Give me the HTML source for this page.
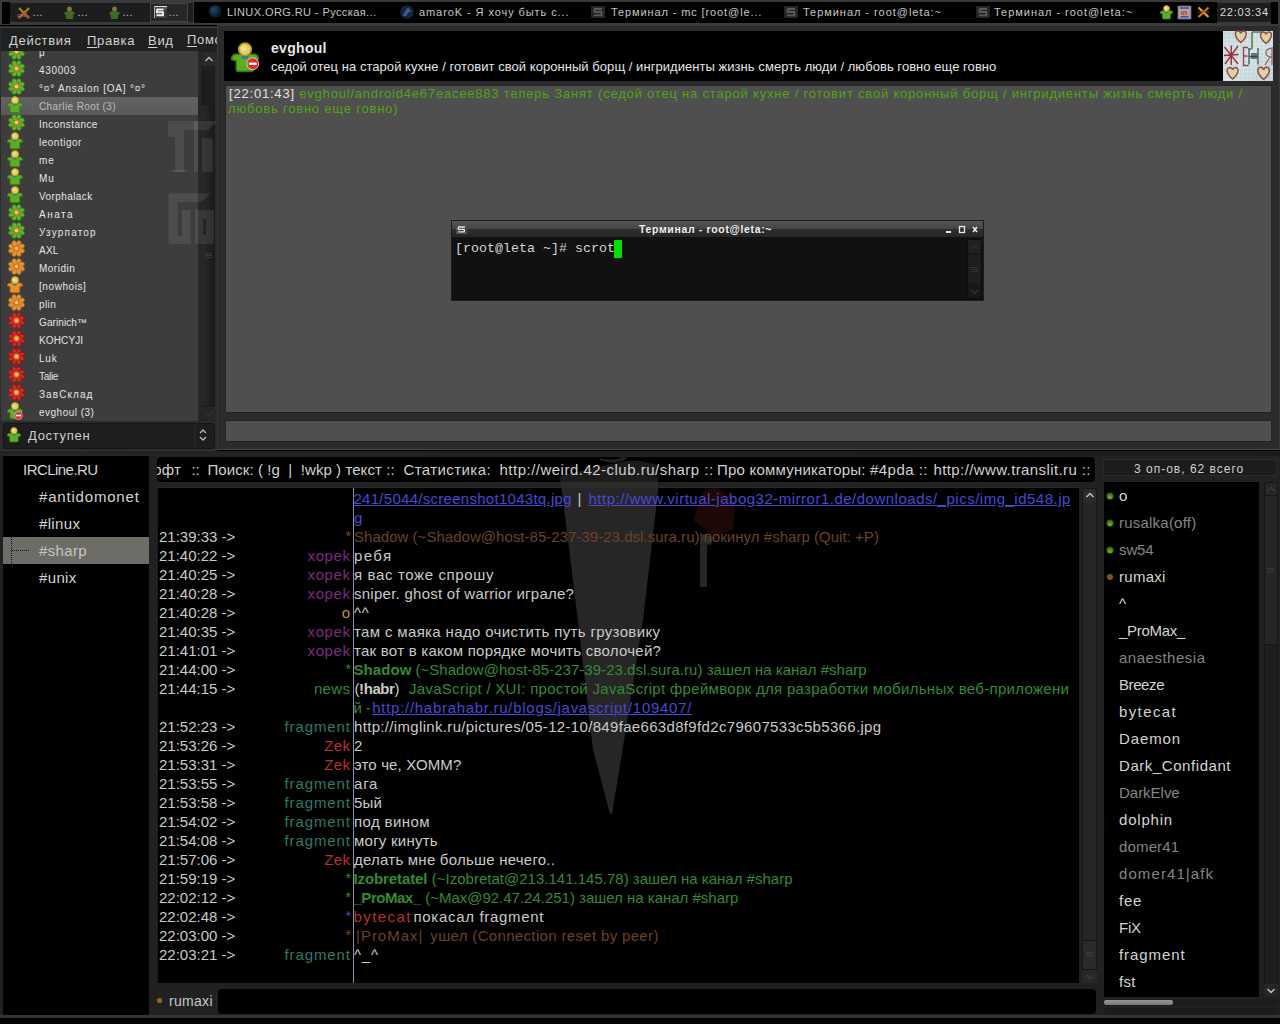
<!DOCTYPE html><html><head><meta charset="utf-8"><style>
*{margin:0;padding:0;box-sizing:border-box}
html,body{width:1280px;height:1024px;overflow:hidden;background:#000;font-family:"Liberation Sans",sans-serif;color:#ddd}
.a{position:absolute}
.t{position:absolute;white-space:nowrap;line-height:1}
svg.i{position:absolute;overflow:visible}
</style></head><body>
<svg width="0" height="0" style="position:absolute">
<defs>
<symbol id="flowerG" viewBox="0 0 16 16"><g fill="#7cc448" stroke="#3a8a12" stroke-width="1"><ellipse cx="8" cy="3.4" rx="2.1" ry="3.1" transform="rotate(22.5 8 8)"/><ellipse cx="8" cy="3.4" rx="2.1" ry="3.1" transform="rotate(67.5 8 8)"/><ellipse cx="8" cy="3.4" rx="2.1" ry="3.1" transform="rotate(112.5 8 8)"/><ellipse cx="8" cy="3.4" rx="2.1" ry="3.1" transform="rotate(157.5 8 8)"/><ellipse cx="8" cy="3.4" rx="2.1" ry="3.1" transform="rotate(202.5 8 8)"/><ellipse cx="8" cy="3.4" rx="2.1" ry="3.1" transform="rotate(247.5 8 8)"/><ellipse cx="8" cy="3.4" rx="2.1" ry="3.1" transform="rotate(292.5 8 8)"/><ellipse cx="8" cy="3.4" rx="2.1" ry="3.1" transform="rotate(337.5 8 8)"/></g><g fill="#5aa81e" stroke="none"><ellipse cx="8" cy="3.4" rx="0.9" ry="1.8" transform="rotate(22.5 8 8)"/><ellipse cx="8" cy="3.4" rx="0.9" ry="1.8" transform="rotate(67.5 8 8)"/><ellipse cx="8" cy="3.4" rx="0.9" ry="1.8" transform="rotate(112.5 8 8)"/><ellipse cx="8" cy="3.4" rx="0.9" ry="1.8" transform="rotate(157.5 8 8)"/><ellipse cx="8" cy="3.4" rx="0.9" ry="1.8" transform="rotate(202.5 8 8)"/><ellipse cx="8" cy="3.4" rx="0.9" ry="1.8" transform="rotate(247.5 8 8)"/><ellipse cx="8" cy="3.4" rx="0.9" ry="1.8" transform="rotate(292.5 8 8)"/><ellipse cx="8" cy="3.4" rx="0.9" ry="1.8" transform="rotate(337.5 8 8)"/></g><circle cx="8" cy="8" r="2.3" fill="#e8c888" stroke="#d86a18" stroke-width="1"/></symbol>
<symbol id="flowerO" viewBox="0 0 16 16"><g fill="#eca650" stroke="#b8701a" stroke-width="1"><ellipse cx="8" cy="3.4" rx="2.1" ry="3.1" transform="rotate(22.5 8 8)"/><ellipse cx="8" cy="3.4" rx="2.1" ry="3.1" transform="rotate(67.5 8 8)"/><ellipse cx="8" cy="3.4" rx="2.1" ry="3.1" transform="rotate(112.5 8 8)"/><ellipse cx="8" cy="3.4" rx="2.1" ry="3.1" transform="rotate(157.5 8 8)"/><ellipse cx="8" cy="3.4" rx="2.1" ry="3.1" transform="rotate(202.5 8 8)"/><ellipse cx="8" cy="3.4" rx="2.1" ry="3.1" transform="rotate(247.5 8 8)"/><ellipse cx="8" cy="3.4" rx="2.1" ry="3.1" transform="rotate(292.5 8 8)"/><ellipse cx="8" cy="3.4" rx="2.1" ry="3.1" transform="rotate(337.5 8 8)"/></g><g fill="#e08a30" stroke="none"><ellipse cx="8" cy="3.4" rx="0.9" ry="1.8" transform="rotate(22.5 8 8)"/><ellipse cx="8" cy="3.4" rx="0.9" ry="1.8" transform="rotate(67.5 8 8)"/><ellipse cx="8" cy="3.4" rx="0.9" ry="1.8" transform="rotate(112.5 8 8)"/><ellipse cx="8" cy="3.4" rx="0.9" ry="1.8" transform="rotate(157.5 8 8)"/><ellipse cx="8" cy="3.4" rx="0.9" ry="1.8" transform="rotate(202.5 8 8)"/><ellipse cx="8" cy="3.4" rx="0.9" ry="1.8" transform="rotate(247.5 8 8)"/><ellipse cx="8" cy="3.4" rx="0.9" ry="1.8" transform="rotate(292.5 8 8)"/><ellipse cx="8" cy="3.4" rx="0.9" ry="1.8" transform="rotate(337.5 8 8)"/></g><circle cx="8" cy="8" r="2.3" fill="#f0c070" stroke="#c86a10" stroke-width="1"/></symbol>
<symbol id="flowerR" viewBox="0 0 16 16"><g fill="#dc3a3a" stroke="#9a1414" stroke-width="1"><ellipse cx="8" cy="3.4" rx="2.1" ry="3.1" transform="rotate(22.5 8 8)"/><ellipse cx="8" cy="3.4" rx="2.1" ry="3.1" transform="rotate(67.5 8 8)"/><ellipse cx="8" cy="3.4" rx="2.1" ry="3.1" transform="rotate(112.5 8 8)"/><ellipse cx="8" cy="3.4" rx="2.1" ry="3.1" transform="rotate(157.5 8 8)"/><ellipse cx="8" cy="3.4" rx="2.1" ry="3.1" transform="rotate(202.5 8 8)"/><ellipse cx="8" cy="3.4" rx="2.1" ry="3.1" transform="rotate(247.5 8 8)"/><ellipse cx="8" cy="3.4" rx="2.1" ry="3.1" transform="rotate(292.5 8 8)"/><ellipse cx="8" cy="3.4" rx="2.1" ry="3.1" transform="rotate(337.5 8 8)"/></g><g fill="#c02020" stroke="none"><ellipse cx="8" cy="3.4" rx="0.9" ry="1.8" transform="rotate(22.5 8 8)"/><ellipse cx="8" cy="3.4" rx="0.9" ry="1.8" transform="rotate(67.5 8 8)"/><ellipse cx="8" cy="3.4" rx="0.9" ry="1.8" transform="rotate(112.5 8 8)"/><ellipse cx="8" cy="3.4" rx="0.9" ry="1.8" transform="rotate(157.5 8 8)"/><ellipse cx="8" cy="3.4" rx="0.9" ry="1.8" transform="rotate(202.5 8 8)"/><ellipse cx="8" cy="3.4" rx="0.9" ry="1.8" transform="rotate(247.5 8 8)"/><ellipse cx="8" cy="3.4" rx="0.9" ry="1.8" transform="rotate(292.5 8 8)"/><ellipse cx="8" cy="3.4" rx="0.9" ry="1.8" transform="rotate(337.5 8 8)"/></g><circle cx="8" cy="8" r="2.3" fill="#f0c060" stroke="#e07a20" stroke-width="1"/></symbol>
<symbol id="personG" viewBox="0 0 16 18"><path d="M2.2 7 Q0.2 7.8 0.3 10 L3 10.8 L3 15.6 Q3.2 16.8 4.4 16.8 L11.6 16.8 Q12.8 16.8 12.8 15.6 L12.8 10.8 L15.6 10 Q15.8 7.8 13.8 7 Z" fill="#5cae22" stroke="#3a7a12" stroke-width="0.9"/><path d="M5.6 6.8 L10.2 6.8 Q10 9.8 7.9 9.8 Q5.8 9.8 5.6 6.8 Z" fill="#3f6fb0"/><circle cx="8" cy="4.2" r="3.6" fill="#e4d060" stroke="#b89418" stroke-width="0.9"/><circle cx="7.3" cy="3.6" r="1.6" fill="#f0e8b0" opacity="0.6"/></symbol>
<symbol id="personO" viewBox="0 0 16 18"><path d="M2.2 7 Q0.2 7.8 0.3 10 L3 10.8 L3 15.6 Q3.2 16.8 4.4 16.8 L11.6 16.8 Q12.8 16.8 12.8 15.6 L12.8 10.8 L15.6 10 Q15.8 7.8 13.8 7 Z" fill="#e8902a" stroke="#a86010" stroke-width="0.9"/><path d="M5.6 6.8 L10.2 6.8 Q10 9.8 7.9 9.8 Q5.8 9.8 5.6 6.8 Z" fill="#3f6fb0"/><circle cx="8" cy="4.2" r="3.6" fill="#e4d060" stroke="#b89418" stroke-width="0.9"/><circle cx="7.3" cy="3.6" r="1.6" fill="#f0e8b0" opacity="0.6"/></symbol>
<symbol id="minus" viewBox="0 0 16 16">
 <circle cx="8" cy="8" r="7" fill="#e22a2a" stroke="#fff" stroke-width="0.8"/>
 <rect x="3.5" y="6.6" width="9" height="2.8" fill="#fff"/>
</symbol>
<symbol id="termico" viewBox="0 0 16 16">
 <rect x="0.5" y="0.5" width="15" height="15" fill="#2a2a2a" stroke="#555" stroke-width="1"/>
 <path d="M3 4 H12 M3 4 V8 H11 V12 H3" fill="none" stroke="#888" stroke-width="2"/>
</symbol>
</defs></svg>
<div class="a" style="left:0px;top:0px;width:1280px;height:25px;background:#3a3a3a"></div>
<div class="a" style="left:2px;top:2px;width:8px;height:22px;background:#000"></div>
<div class="a" style="left:10px;top:3px;width:183px;height:19px;background:#1d1d1d"></div>
<div class="a" style="left:150px;top:3px;width:38px;height:19px;background:#262626;border:1px solid #444"></div>
<div class="a" style="left:194px;top:2px;width:1023px;height:21px;background:#000"></div>
<div class="a" style="left:1217px;top:3px;width:54px;height:19px;background:#1c1c1c"></div>
<div class="a" style="left:1271px;top:2px;width:7px;height:22px;background:#000"></div>
<svg class="i" style="left:17px;top:6px" width="14" height="14"><path d="M2 2 L12 12 M12 2 L2 12" stroke="#a0801a" stroke-width="2.4"/><path d="M2 12 L7 7 M7 7 L12 12" stroke="#c04a1a" stroke-width="2.4"/><text x="0" y="11" font-size="5" fill="#888" font-family="Liberation Sans">cmd</text></svg>
<div class="t" style="left:32px;top:7px;font-size:11px;color:#c6c6c6;letter-spacing:0.36px;color:#bbb;letter-spacing:0">…</div>
<svg class="i" style="left:63px;top:6px" width="13" height="13"><path d="M1 8 Q1.5 5.5 4 5.3 L9 5.3 Q11.5 5.5 12 8 L10.3 8.4 L10.2 12.5 Q6.5 13.5 2.8 12.5 L2.7 8.4 Z" fill="#3e6a1e"/><circle cx="6.5" cy="3" r="2.4" fill="#857a3a"/><rect x="5" y="5" width="3" height="1.5" fill="#3a5a80"/></svg>
<div class="t" style="left:77px;top:7px;font-size:11px;color:#c6c6c6;letter-spacing:0.36px;color:#bbb;letter-spacing:0">…</div>
<svg class="i" style="left:108px;top:6px" width="13" height="13"><path d="M1 8 Q1.5 5.5 4 5.3 L9 5.3 Q11.5 5.5 12 8 L10.3 8.4 L10.2 12.5 Q6.5 13.5 2.8 12.5 L2.7 8.4 Z" fill="#3e6a1e"/><circle cx="6.5" cy="3" r="2.4" fill="#857a3a"/><rect x="5" y="5" width="3" height="1.5" fill="#3a5a80"/></svg>
<div class="t" style="left:122px;top:7px;font-size:11px;color:#c6c6c6;letter-spacing:0.36px;color:#bbb;letter-spacing:0">…</div>
<svg class="i" style="left:154px;top:6px" width="13" height="12"><rect x="0" y="0" width="13" height="12" fill="#555"/><rect x="0" y="0" width="13" height="1.2" fill="#ddd"/><rect x="0" y="0" width="1.2" height="12" fill="#aaa"/><rect x="1.2" y="1.2" width="11.8" height="10.8" fill="#3a3a3a"/><path d="M2.5 3.5 H9.5 M3 3.3 V6.2 H9 V9.2 H2.5" fill="none" stroke="#f0f0f0" stroke-width="1.9"/><path d="M9 1.2 L13 1.2 L11 4 Z" fill="#666"/></svg>
<div class="t" style="left:168px;top:7px;font-size:11px;color:#c6c6c6;letter-spacing:0.36px;color:#bbb;letter-spacing:0">…</div>
<svg class="i" style="left:209px;top:5px" width="13" height="13"><defs><radialGradient id="gg209" cx="0.35" cy="0.35" r="0.7"><stop offset="0" stop-color="#1e4a6a"/><stop offset="1" stop-color="#06121e"/></radialGradient></defs><circle cx="6.5" cy="6.5" r="6.3" fill="url(#gg209)"/></svg>
<div class="t" style="left:227px;top:7px;font-size:11px;color:#c6c6c6;letter-spacing:0.41px">LINUX.ORG.RU - Русская...</div>
<svg class="i" style="left:400px;top:5px" width="14" height="14"><circle cx="7" cy="7" r="6.8" fill="#16243e"/><path d="M3 11 L5 6 L7 3.5 L9 2.5 L9.5 4.5 L11.5 6 L10 7 L8 7.5 L6.5 11 Z" fill="#3c5a80"/></svg>
<div class="t" style="left:419px;top:7px;font-size:11px;color:#c6c6c6;letter-spacing:0.92px">amaroK - Я хочу быть с...</div>
<svg class="i" style="left:591px;top:6px" width="14" height="12"><rect x="0" y="0" width="14" height="12" fill="#252525"/><path d="M3 3 H11 M3.5 2.8 V6 H10.5 V9.3 H3" fill="none" stroke="#5a5a5a" stroke-width="1.8"/></svg>
<div class="t" style="left:611px;top:7px;font-size:11px;color:#c6c6c6;letter-spacing:0.89px">Терминал - mc [root@le...</div>
<svg class="i" style="left:784px;top:6px" width="14" height="12"><rect x="0" y="0" width="14" height="12" fill="#252525"/><path d="M3 3 H11 M3.5 2.8 V6 H10.5 V9.3 H3" fill="none" stroke="#5a5a5a" stroke-width="1.8"/></svg>
<div class="t" style="left:803px;top:7px;font-size:11px;color:#c6c6c6;letter-spacing:0.96px">Терминал - root@leta:~</div>
<svg class="i" style="left:976px;top:6px" width="14" height="12"><rect x="0" y="0" width="14" height="12" fill="#252525"/><path d="M3 3 H11 M3.5 2.8 V6 H10.5 V9.3 H3" fill="none" stroke="#5a5a5a" stroke-width="1.8"/></svg>
<div class="t" style="left:994px;top:7px;font-size:11px;color:#c6c6c6;letter-spacing:0.97px">Терминал - root@leta:~</div>
<svg class="i" style="left:1159px;top:5px" width="15" height="15" viewBox="0 0 16 18"><use href="#personG"/></svg>
<svg class="i" style="left:1178px;top:6px" width="13" height="13"><rect x="0" y="0" width="13" height="13" fill="#aaa59c" stroke="#6a6a6a" stroke-width="0.8"/><rect x="2" y="1.2" width="9" height="1.6" fill="#3030e0" opacity="0.8"/><text x="3" y="8.6" font-size="6" fill="#e01818" font-family="Liberation Sans" font-weight="bold">05</text><rect x="2.5" y="10" width="8" height="1.6" fill="#3030e0" opacity="0.8"/></svg>
<svg class="i" style="left:1197px;top:6px" width="13" height="12"><path d="M1.5 1.5 L11.5 11" stroke="#e0a818" stroke-width="2.2"/><path d="M11.5 1.5 L1.5 11" stroke="#e06a18" stroke-width="2.2"/><path d="M1 6.5 Q6.5 3.5 12 6.5" stroke="#555" stroke-width="0.9" fill="none"/></svg>
<div class="t" style="left:1220px;top:7px;font-size:11px;color:#d8d8d8;letter-spacing:0.75px">22:03:34</div>
<div class="a" style="left:0px;top:25px;width:217px;height:2px;background:#000"></div>
<div class="a" style="left:0px;top:26px;width:218px;height:425px;background:#2a2a2a"></div>
<div class="a" style="left:0px;top:27px;width:217px;height:1px;background:#3c3c3c"></div>
<div class="a" style="left:1px;top:28px;width:216px;height:23px;background:#202020"></div>
<div class="t" style="left:9px;top:33px;font-size:13px;color:#d2d2d2;letter-spacing:0.7px;top:34px;"><span style="text-decoration:underline;text-underline-offset:2px">Д</span>ействия</div>
<div class="t" style="left:87px;top:33px;font-size:13px;color:#d2d2d2;letter-spacing:0.7px;top:34px;"><span style="text-decoration:underline;text-underline-offset:2px">П</span>равка</div>
<div class="t" style="left:148px;top:33px;font-size:13px;color:#d2d2d2;letter-spacing:0.7px;top:34px;"><span style="text-decoration:underline;text-underline-offset:2px">В</span>ид</div>
<div class="a" style="left:187px;top:28px;width:30px;height:23px;overflow:hidden"><div class="t" style="left:0;top:5px;font-size:13px;color:#d2d2d2;letter-spacing:0.7px"><span style="text-decoration:underline;text-underline-offset:2px">П</span>омощь</div></div>
<div class="a" style="left:1px;top:51px;width:197px;height:370px;background:#3d3d3d;overflow:hidden">
<div class="a" style="left:0;top:46px;width:198px;height:18px;background:linear-gradient(#626262,#5a5a5a)"></div>
<svg class="i" style="left:6.5px;top:-8px" width="17" height="17"><use href="#flowerG"/></svg>
<div class="t" style="left:38px;top:-3px;font-size:10px;color:#e4e4e4;letter-spacing:0.35px">μ</div>
<svg class="i" style="left:6.5px;top:9px" width="17" height="17"><use href="#flowerG"/></svg>
<div class="t" style="left:38px;top:15px;font-size:10px;color:#e4e4e4;letter-spacing:0.65px">430003</div>
<svg class="i" style="left:6.5px;top:27px" width="17" height="17"><use href="#flowerG"/></svg>
<div class="t" style="left:38px;top:33px;font-size:10px;color:#e4e4e4;letter-spacing:0.79px">°¤° Ansalon [OA] °¤°</div>
<svg class="i" style="left:6px;top:45px" width="16" height="18"><use href="#personG"/></svg>
<div class="t" style="left:38px;top:51px;font-size:10px;color:#bdbdbd;letter-spacing:0.40px">Charlie Root (3)</div>
<svg class="i" style="left:6.5px;top:63px" width="17" height="17"><use href="#flowerG"/></svg>
<div class="t" style="left:38px;top:69px;font-size:10px;color:#e4e4e4;letter-spacing:0.45px">Inconstance</div>
<svg class="i" style="left:6px;top:81px" width="16" height="18"><use href="#personG"/></svg>
<div class="t" style="left:38px;top:87px;font-size:10px;color:#e4e4e4;letter-spacing:0.51px">leontigor</div>
<svg class="i" style="left:6px;top:99px" width="16" height="18"><use href="#personG"/></svg>
<div class="t" style="left:38px;top:105px;font-size:10px;color:#e4e4e4;letter-spacing:0.80px">me</div>
<svg class="i" style="left:6px;top:117px" width="16" height="18"><use href="#personG"/></svg>
<div class="t" style="left:38px;top:123px;font-size:10px;color:#e4e4e4;letter-spacing:0.80px">Mu</div>
<svg class="i" style="left:6px;top:135px" width="16" height="18"><use href="#personG"/></svg>
<div class="t" style="left:38px;top:141px;font-size:10px;color:#e4e4e4;letter-spacing:0.41px">Vorphalack</div>
<svg class="i" style="left:6.5px;top:153px" width="17" height="17"><use href="#flowerG"/></svg>
<div class="t" style="left:38px;top:159px;font-size:10px;color:#e4e4e4;letter-spacing:1.53px">Аната</div>
<svg class="i" style="left:6.5px;top:171px" width="17" height="17"><use href="#flowerG"/></svg>
<div class="t" style="left:38px;top:177px;font-size:10px;color:#e4e4e4;letter-spacing:1.20px">Узурпатор</div>
<svg class="i" style="left:6.5px;top:189px" width="17" height="17"><use href="#flowerO"/></svg>
<div class="t" style="left:38px;top:195px;font-size:10px;color:#e4e4e4;letter-spacing:0.25px">AXL</div>
<svg class="i" style="left:6.5px;top:207px" width="17" height="17"><use href="#flowerO"/></svg>
<div class="t" style="left:38px;top:213px;font-size:10px;color:#e4e4e4;letter-spacing:0.49px">Moridin</div>
<svg class="i" style="left:6px;top:225px" width="16" height="18"><use href="#personO"/></svg>
<div class="t" style="left:38px;top:231px;font-size:10px;color:#e4e4e4;letter-spacing:0.58px">[nowhois]</div>
<svg class="i" style="left:6.5px;top:243px" width="17" height="17"><use href="#flowerO"/></svg>
<div class="t" style="left:38px;top:249px;font-size:10px;color:#e4e4e4;letter-spacing:0.41px">plin</div>
<svg class="i" style="left:6.5px;top:261px" width="17" height="17"><use href="#flowerR"/></svg>
<div class="t" style="left:38px;top:267px;font-size:10px;color:#e4e4e4;letter-spacing:0.10px">Garinich™</div>
<svg class="i" style="left:6.5px;top:279px" width="17" height="17"><use href="#flowerR"/></svg>
<div class="t" style="left:38px;top:285px;font-size:10px;color:#e4e4e4;letter-spacing:0.13px">KOHCYJI</div>
<svg class="i" style="left:6.5px;top:297px" width="17" height="17"><use href="#flowerR"/></svg>
<div class="t" style="left:38px;top:303px;font-size:10px;color:#e4e4e4;letter-spacing:0.80px">Luk</div>
<svg class="i" style="left:6.5px;top:315px" width="17" height="17"><use href="#flowerR"/></svg>
<div class="t" style="left:38px;top:321px;font-size:10px;color:#e4e4e4;letter-spacing:-0.29px">Talie</div>
<svg class="i" style="left:6.5px;top:333px" width="17" height="17"><use href="#flowerR"/></svg>
<div class="t" style="left:38px;top:339px;font-size:10px;color:#e4e4e4;letter-spacing:1.08px">ЗавСклад</div>
<svg class="i" style="left:6px;top:351px" width="16" height="18"><use href="#personG"/></svg>
<svg class="i" style="left:13px;top:360px" width="9" height="9"><use href="#minus"/></svg>
<div class="t" style="left:38px;top:357px;font-size:10px;color:#e4e4e4;letter-spacing:0.49px">evghoul (3)</div>
</div>
<div class="a" style="left:198px;top:51px;width:4px;height:370px;background:#262626"></div>
<div class="a" style="left:202px;top:51px;width:13px;height:370px;background:#1e1e1e;border-left:1px solid #161616"></div>
<div class="a" style="left:202px;top:52px;width:13px;height:14px;background:#2a2a2a;border-radius:3px 3px 0 0"></div>
<svg class="i" style="left:204px;top:55px" width="10" height="8"><path d="M1.5 6 L5 2.5 L8.5 6" stroke="#bbb" stroke-width="1.4" fill="none"/></svg>
<div class="a" style="left:202px;top:104px;width:13px;height:303px;background:linear-gradient(90deg,#282828,#1a1a1a);border-top:1px solid #1a1a1a;border-bottom:1px solid #1a1a1a"></div>
<div class="a" style="left:205px;top:253px;width:7px;height:1px;background:#3a3a3a"></div>
<div class="a" style="left:205px;top:255px;width:7px;height:1px;background:#3a3a3a"></div>
<div class="a" style="left:205px;top:257px;width:7px;height:1px;background:#3a3a3a"></div>
<div class="a" style="left:202px;top:407px;width:13px;height:14px;background:#262626;border-radius:0 0 3px 3px"></div>
<svg class="i" style="left:204px;top:410px" width="10" height="8"><path d="M1.5 2 L5 5.5 L8.5 2" stroke="#333" stroke-width="1.4" fill="none"/></svg>
<div class="a" style="left:3px;top:423px;width:212px;height:26px;background:#1e1e1e;border:1px solid #151515;border-radius:3px"></div>
<div class="a" style="left:194px;top:425px;width:1px;height:22px;background:#2a2a2a"></div>
<svg class="i" style="left:6px;top:427px" width="16" height="16"><use href="#personG"/></svg>
<div class="t" style="left:28px;top:429px;font-size:13px;color:#cfcfcf;letter-spacing:0.7px">Доступен</div>
<svg class="i" style="left:198px;top:427px" width="10" height="16"><path d="M2 6 L5 3 L8 6 M2 10 L5 13 L8 10" stroke="#bbb" stroke-width="1.3" fill="none"/></svg>
<svg class="i" style="left:160px;top:115px" width="58" height="135" viewBox="0 0 58 135">
<g fill="#fff" fill-opacity="0.085">
<path d="M8 6 H56 V8 L48 15 H8 Z"/>
<path d="M8 15 H15 V22 H12 Q8 22 8 18 Z"/>
<rect x="15" y="15" width="9" height="42"/>
<rect x="11" y="55" width="16" height="2"/>
<rect x="34" y="6" width="4" height="51"/>
<rect x="42" y="23" width="11" height="34" rx="3"/>
<path d="M11.5 78.3 H50.6 L41.5 87 H8.5 V81.3 Q8.5 78.3 11.5 78.3 Z"/>
<path d="M8.5 87 H17.6 V129 H11.5 Q8.5 129 8.5 126 Z"/>
<rect x="17.6" y="121" width="13" height="8"/>
<rect x="22" y="95" width="8.6" height="26"/>
<path d="M35 95 H54 V129 H35 Z M43 104 V120 H46 V104 Z" fill-rule="evenodd"/>
</g>
</svg>
<div class="a" style="left:217px;top:25px;width:1063px;height:426px;background:#2b2b2b"></div>
<div class="a" style="left:217px;top:25px;width:1063px;height:1px;background:#3a3a3a"></div>
<div class="a" style="left:217px;top:25px;width:1px;height:426px;background:#383838"></div>
<div class="a" style="left:1279px;top:25px;width:1px;height:425px;background:#3a3a3a"></div>
<div class="a" style="left:224px;top:31px;width:999px;height:50px;background:#000"></div>
<svg class="i" style="left:231px;top:42px" width="28" height="31.5" viewBox="0 0 16 18"><use href="#personG"/></svg>
<svg class="i" style="left:246px;top:57px" width="13.5" height="13.5"><use href="#minus"/></svg>
<div class="t" style="left:271px;top:41px;font-size:14px;font-weight:bold;color:#e8e8e8;letter-spacing:0.3px">evghoul</div>
<div class="t" style="left:271px;top:60px;font-size:13px;color:#e4e4e4;letter-spacing:0.05px">седой отец на старой кухне / готовит свой коронный борщ / ингридиенты жизнь смерть люди / любовь говно еще говно</div>
<svg class="i" style="left:1223px;top:31px" width="50" height="50" viewBox="0 0 50 50">
<defs><linearGradient id="avg" x1="0" y1="0" x2="1" y2="1"><stop offset="0" stop-color="#c4d8dc"/><stop offset="0.5" stop-color="#d2e2e4"/><stop offset="1" stop-color="#bcd0d4"/></linearGradient>
<pattern id="avn" width="4" height="4" patternUnits="userSpaceOnUse"><rect width="4" height="4" fill="none"/><rect x="0" y="0" width="1" height="1" fill="#fff" opacity="0.4"/><rect x="2" y="2" width="1" height="1" fill="#8aa" opacity="0.3"/><rect x="3" y="1" width="1" height="1" fill="#fff" opacity="0.3"/></pattern></defs>
<rect width="50" height="50" fill="url(#avg)"/>
<rect width="50" height="50" fill="url(#avn)"/>
<path transform="translate(17.8 6) scale(1.0)" d="M0 5.5 C-7 0 -6.5 -6 -2.8 -6 C-1.2 -6 -0.3 -4.8 0 -3.6 C0.3 -4.8 1.2 -6 2.8 -6 C6.5 -6 7 0 0 5.5 Z" fill="#d8d6a4" stroke="#9a4a4a" stroke-width="1.5"/><path transform="translate(43 7) scale(1.0)" d="M0 5.5 C-7 0 -6.5 -6 -2.8 -6 C-1.2 -6 -0.3 -4.8 0 -3.6 C0.3 -4.8 1.2 -6 2.8 -6 C6.5 -6 7 0 0 5.5 Z" fill="#d8d6a4" stroke="#9a4a4a" stroke-width="1.5"/><path transform="translate(9.6 42.5) scale(1.0)" d="M0 5.5 C-7 0 -6.5 -6 -2.8 -6 C-1.2 -6 -0.3 -4.8 0 -3.6 C0.3 -4.8 1.2 -6 2.8 -6 C6.5 -6 7 0 0 5.5 Z" fill="#d8d6a4" stroke="#9a4a4a" stroke-width="1.5"/><path transform="translate(40.6 42.5) scale(1.05)" d="M0 5.5 C-7 0 -6.5 -6 -2.8 -6 C-1.2 -6 -0.3 -4.8 0 -3.6 C0.3 -4.8 1.2 -6 2.8 -6 C6.5 -6 7 0 0 5.5 Z" fill="#d8d6a4" stroke="#9a4a4a" stroke-width="1.5"/>
<path d="M29 1 V17 L26 19 M29 1 H41" stroke="#5a7a40" stroke-width="1.5" fill="none"/>
<path d="M1.5 16 L15 33 M15 15 L2 33 M8.3 14.5 V34 M1 24.5 L15.5 23.5" stroke="#9a3038" stroke-width="1.4"/>
<path d="M25 16.5 H20.5 V34.5 H25.5 M20.5 25 H24.5" stroke="#9a4048" stroke-width="1.3" fill="none"/>
<path d="M26 17 V33.5 M35 17 V33.5 M26 25.5 H35" stroke="#4a4a50" stroke-width="1.3"/>
<rect x="28" y="22" width="6" height="6" fill="#2a4a5a" opacity="0.7"/>
<path d="M50 17 Q43 17 43 22 Q43 26 49 26 M49 17 V34 M47 26 L42 34" stroke="#a06068" stroke-width="1.3" fill="none"/>
</svg>
<div class="a" style="left:225px;top:85px;width:1047px;height:328px;background:#4f4f4f;border-top:1px solid #262626;border-left:1px solid #262626;border-right:1px solid #262626;border-bottom:1px solid #222"></div>
<div class="t" style="left:229px;top:87px;font-size:13px;letter-spacing:0.8px;"><span style="color:#e2e2e2">[22:01:43]</span> <span style="color:#52a412">evghoul/android4e67eacee883 теперь Занят (седой отец на старой кухне / готовит свой коронный борщ / ингридиенты жизнь смерть люди /</span></div>
<div class="t" style="left:228px;top:102px;font-size:13px;letter-spacing:0.8px;"><span style="color:#52a412">любовь говно еще говно)</span></div>
<div class="a" style="left:225px;top:420px;width:1047px;height:22px;background:#4f4f4f;border-top:1px solid #222;border-left:1px solid #262626;border-right:1px solid #262626;border-bottom:1px solid #222"></div>
<div class="a" style="left:217px;top:449px;width:1063px;height:1px;background:#444"></div>
<div class="a" style="left:217px;top:450px;width:1063px;height:1px;background:#000"></div>
<div class="a" style="left:0px;top:450px;width:217px;height:2px;background:#333"></div>
<div class="a" style="left:0px;top:451px;width:1280px;height:566px;background:#212121"></div>
<div class="a" style="left:0px;top:452px;width:1280px;height:4px;background:linear-gradient(90deg,#262626,#1a1a1a)"></div>
<div class="a" style="left:0px;top:1015px;width:1280px;height:3px;background:#343434"></div>
<div class="a" style="left:0px;top:1018px;width:1280px;height:6px;background:#000"></div>
<div class="a" style="left:3px;top:456px;width:146px;height:559px;background:#000"></div>
<div class="a" style="left:3px;top:537px;width:146px;height:27px;background:#6e6c66"></div>
<svg class="i" style="left:11px;top:537px" width="20" height="27"><path d="M0.5 0 V27 M1 13.5 H18" stroke="#111" stroke-width="1" stroke-dasharray="1 1"/></svg>
<div class="t" style="left:23px;top:462px;font-size:15px;color:#d4d4d4;letter-spacing:-0.54px">IRCLine.RU</div>
<div class="t" style="left:39px;top:489px;font-size:15px;color:#d4d4d4;letter-spacing:0.81px">#antidomonet</div>
<div class="t" style="left:39px;top:516px;font-size:15px;letter-spacing:0.3px;color:#d4d4d4;letter-spacing:0.35px">#linux</div>
<div class="t" style="left:39px;top:543px;font-size:15px;letter-spacing:0.3px;color:#c4c4c0;letter-spacing:0.35px">#sharp</div>
<div class="t" style="left:39px;top:570px;font-size:15px;letter-spacing:0.3px;color:#d4d4d4;letter-spacing:0.35px">#unix</div>
<div class="a" style="left:157px;top:457px;width:938px;height:25px;background:#000;border-radius:4px;overflow:hidden">
<svg class="i" style="left:0;top:0" width="938" height="25"><path d="M403.5 25 L403.5 20 Q404 18 410 17 L470 4 Q480 2 500 8 L501 25 Z" fill="#1c1c1c"/><path d="M443 1 Q455 5 468 -1 L470 2 Q456 9 443 3 Z" fill="#202020"/></svg>
<div class="t" style="right:914px;color:#d0d0d0;font-size:15px;top:5px;letter-spacing:0.2px">офт</div>
<div class="t" style="left:34.5px;color:#d0d0d0;font-size:15px;top:5px;letter-spacing:-0.20px">::</div>
<div class="t" style="left:50.5px;color:#d0d0d0;font-size:15px;top:5px;letter-spacing:0.07px">Поиск: ( !g &nbsp;| &nbsp;!wkp ) текст ::</div>
<div class="t" style="left:246.5px;color:#d0d0d0;font-size:15px;top:5px;letter-spacing:0.41px">Статистика:</div>
<div class="t" style="left:342.5px;color:#d0d0d0;font-size:15px;top:5px;letter-spacing:0.49px">http://weird.42-club.ru/sharp ::</div>
<div class="t" style="left:560.0px;color:#d0d0d0;font-size:15px;top:5px;letter-spacing:0.21px">Про коммуникаторы:</div>
<div class="t" style="left:713.0px;color:#d0d0d0;font-size:15px;top:5px;letter-spacing:0.47px">#4pda ::</div>
<div class="t" style="left:776.5px;color:#d0d0d0;font-size:15px;top:5px;letter-spacing:0.39px">http://www.translit.ru ::</div>
</div>
<div class="a" style="left:561px;top:482px;width:97px;height:5px;background:#2c2c2c"></div>
<div class="a" style="left:157px;top:487px;width:922px;height:496px;background:#000;border-top:1px solid #2a2a2a;border-left:1px solid #1a1a1a;overflow:hidden">
<svg class="i" style="left:0;top:-1px" width="922" height="497"><g transform="translate(0,1)"><path d="M403.5 -1 L500.5 -1 L485 132 L464.6 261.5 L454 326 L452 326 L435 261.5 L419.8 132 Z" fill="#262626"/><path d="M535 32 L545 4 L557 -1 L577 12 L575 42 L557 49 Z" fill="#1e0707"/><path d="M542 45 L555 49 L553 57 L542 55 Z" fill="#2c2c2c"/><rect x="542" y="55" width="7" height="44" fill="#262626"/></g></svg>
<div class="a" style="left:403px;top:-1px;width:98px;height:1px;background:#3a3a3a"></div>
<div class="a" style="left:195px;top:0;width:1px;height:496px;background:#8a8aa8"></div>
</div>
<div class="t" style="left:353.5px;top:491px;font-size:15px;letter-spacing:0.28px"><span style="color:#4848d0;text-decoration:underline">241/5044/screenshot1043tq.jpg</span></div>
<div class="t" style="left:577.5px;top:491px;font-size:15px;letter-spacing:-0.20px"><span style="color:#cacaca">|</span></div>
<div class="t" style="left:588.5px;top:491px;font-size:15px;letter-spacing:0.50px"><span style="color:#4848d0;text-decoration:underline">http://www.virtual-jabog32-mirror1.de/downloads/_pics/img_id548.jp</span></div>
<div class="t" style="left:354px;top:510px;font-size:15px;letter-spacing:0.80px"><span style="color:#4848d0;text-decoration:underline">g</span></div>
<div class="t" style="left:159px;top:529px;font-size:15px;color:#cacaca;letter-spacing:-0.00px">21:39:33 -&gt;</div>
<div class="t" style="left:250px;width:101px;top:529px;text-align:right;font-size:14px;color:#7a4a2a">*</div>
<div class="t" style="left:354px;top:529px;font-size:15px;letter-spacing:0.03px"><span style="color:#6c4228">Shadow (~Shadow@host-85-237-39-23.dsl.sura.ru) покинул #sharp (Quit: +P)</span></div>
<div class="t" style="left:159px;top:548px;font-size:15px;color:#cacaca;letter-spacing:-0.00px">21:40:22 -&gt;</div>
<div class="t" style="left:200px;width:150.59px;top:548px;text-align:right;font-size:15px;color:#7e2a80;letter-spacing:0.59px">xopek</div>
<div class="t" style="left:354px;top:548px;font-size:15px;letter-spacing:1.37px"><span style="color:#cacaca">ребя</span></div>
<div class="t" style="left:159px;top:567px;font-size:15px;color:#cacaca;letter-spacing:-0.00px">21:40:25 -&gt;</div>
<div class="t" style="left:200px;width:150.59px;top:567px;text-align:right;font-size:15px;color:#7e2a80;letter-spacing:0.59px">xopek</div>
<div class="t" style="left:354px;top:567px;font-size:15px;letter-spacing:0.63px"><span style="color:#cacaca">я вас тоже спрошу</span></div>
<div class="t" style="left:159px;top:586px;font-size:15px;color:#cacaca;letter-spacing:-0.00px">21:40:28 -&gt;</div>
<div class="t" style="left:200px;width:150.59px;top:586px;text-align:right;font-size:15px;color:#7e2a80;letter-spacing:0.59px">xopek</div>
<div class="t" style="left:354px;top:586px;font-size:15px;letter-spacing:0.26px"><span style="color:#cacaca">sniper. ghost of warrior играле?</span></div>
<div class="t" style="left:159px;top:605px;font-size:15px;color:#cacaca;letter-spacing:-0.00px">21:40:28 -&gt;</div>
<div class="t" style="left:200px;width:150.35px;top:605px;text-align:right;font-size:15px;color:#c0902a;letter-spacing:0.35px">o</div>
<div class="t" style="left:354px;top:605px;font-size:15px;letter-spacing:0.80px"><span style="color:#cacaca">^^</span></div>
<div class="t" style="left:159px;top:624px;font-size:15px;color:#cacaca;letter-spacing:-0.00px">21:40:35 -&gt;</div>
<div class="t" style="left:200px;width:150.59px;top:624px;text-align:right;font-size:15px;color:#7e2a80;letter-spacing:0.59px">xopek</div>
<div class="t" style="left:354px;top:624px;font-size:15px;letter-spacing:0.35px"><span style="color:#cacaca">там с маяка надо очистить путь грузовику</span></div>
<div class="t" style="left:159px;top:643px;font-size:15px;color:#cacaca;letter-spacing:-0.00px">21:41:01 -&gt;</div>
<div class="t" style="left:200px;width:150.59px;top:643px;text-align:right;font-size:15px;color:#7e2a80;letter-spacing:0.59px">xopek</div>
<div class="t" style="left:354px;top:643px;font-size:15px;letter-spacing:0.26px"><span style="color:#cacaca">так вот в каком порядке мочить сволочей?</span></div>
<div class="t" style="left:159px;top:662px;font-size:15px;color:#cacaca;letter-spacing:-0.00px">21:44:00 -&gt;</div>
<div class="t" style="left:250px;width:101px;top:662px;text-align:right;font-size:14px;color:#348a34">*</div>
<div class="t" style="left:353.5px;top:662px;font-size:15px;letter-spacing:0.10px"><span style="color:#348a34;font-weight:bold">Shadow</span></div>
<div class="t" style="left:415.5px;top:662px;font-size:15px;letter-spacing:0.03px"><span style="color:#348a34">(~Shadow@host-85-237-39-23.dsl.sura.ru) зашел на канал #sharp</span></div>
<div class="t" style="left:159px;top:681px;font-size:15px;color:#cacaca;letter-spacing:-0.00px">21:44:15 -&gt;</div>
<div class="t" style="left:200px;width:150.35px;top:681px;text-align:right;font-size:15px;color:#348a34;letter-spacing:0.35px">news</div>
<div class="t" style="left:354.5px;top:681px;font-size:15px;letter-spacing:-0.42px"><span style="color:#cacaca">(</span><span style="color:#cacaca;font-weight:bold">!habr</span><span style="color:#cacaca">)</span></div>
<div class="t" style="left:408.9px;top:681px;font-size:15px;letter-spacing:0.30px"><span style="color:#348a34">JavaScript / XUI: простой JavaScript фреймворк для разработки мобильных веб-приложени</span></div>
<div class="t" style="left:353.5px;top:700px;font-size:15px;letter-spacing:-0.20px"><span style="color:#348a34">й -</span></div>
<div class="t" style="left:372.3px;top:700px;font-size:15px;letter-spacing:0.71px"><span style="color:#4848d0;text-decoration:underline">http://habrahabr.ru/blogs/javascript/109407/</span></div>
<div class="t" style="left:159px;top:719px;font-size:15px;color:#cacaca;letter-spacing:-0.00px">21:52:23 -&gt;</div>
<div class="t" style="left:200px;width:150.90px;top:719px;text-align:right;font-size:15px;color:#2c7a68;letter-spacing:0.90px">fragment</div>
<div class="t" style="left:354px;top:719px;font-size:15px;letter-spacing:0.33px"><span style="color:#cacaca">http://imglink.ru/pictures/05-12-10/849fae663d8f9fd2c79607533c5b5366.jpg</span></div>
<div class="t" style="left:159px;top:738px;font-size:15px;color:#cacaca;letter-spacing:-0.00px">21:53:26 -&gt;</div>
<div class="t" style="left:200px;width:150.35px;top:738px;text-align:right;font-size:15px;color:#b83030;letter-spacing:0.35px">Zek</div>
<div class="t" style="left:354px;top:738px;font-size:15px;letter-spacing:0.06px"><span style="color:#cacaca">2</span></div>
<div class="t" style="left:159px;top:757px;font-size:15px;color:#cacaca;letter-spacing:-0.00px">21:53:31 -&gt;</div>
<div class="t" style="left:200px;width:150.35px;top:757px;text-align:right;font-size:15px;color:#b83030;letter-spacing:0.35px">Zek</div>
<div class="t" style="left:354px;top:757px;font-size:15px;letter-spacing:0.15px"><span style="color:#cacaca">это че, ХОММ?</span></div>
<div class="t" style="left:159px;top:776px;font-size:15px;color:#cacaca;letter-spacing:-0.00px">21:53:55 -&gt;</div>
<div class="t" style="left:200px;width:150.90px;top:776px;text-align:right;font-size:15px;color:#2c7a68;letter-spacing:0.90px">fragment</div>
<div class="t" style="left:354px;top:776px;font-size:15px;letter-spacing:0.80px"><span style="color:#cacaca">ага</span></div>
<div class="t" style="left:159px;top:795px;font-size:15px;color:#cacaca;letter-spacing:-0.00px">21:53:58 -&gt;</div>
<div class="t" style="left:200px;width:150.90px;top:795px;text-align:right;font-size:15px;color:#2c7a68;letter-spacing:0.90px">fragment</div>
<div class="t" style="left:354px;top:795px;font-size:15px;letter-spacing:0.15px"><span style="color:#cacaca">5ый</span></div>
<div class="t" style="left:159px;top:814px;font-size:15px;color:#cacaca;letter-spacing:-0.00px">21:54:02 -&gt;</div>
<div class="t" style="left:200px;width:150.90px;top:814px;text-align:right;font-size:15px;color:#2c7a68;letter-spacing:0.90px">fragment</div>
<div class="t" style="left:354px;top:814px;font-size:15px;letter-spacing:0.39px"><span style="color:#cacaca">под вином</span></div>
<div class="t" style="left:159px;top:833px;font-size:15px;color:#cacaca;letter-spacing:-0.00px">21:54:08 -&gt;</div>
<div class="t" style="left:200px;width:150.90px;top:833px;text-align:right;font-size:15px;color:#2c7a68;letter-spacing:0.90px">fragment</div>
<div class="t" style="left:354px;top:833px;font-size:15px;letter-spacing:0.24px"><span style="color:#cacaca">могу кинуть</span></div>
<div class="t" style="left:159px;top:852px;font-size:15px;color:#cacaca;letter-spacing:-0.00px">21:57:06 -&gt;</div>
<div class="t" style="left:200px;width:150.35px;top:852px;text-align:right;font-size:15px;color:#b83030;letter-spacing:0.35px">Zek</div>
<div class="t" style="left:354px;top:852px;font-size:15px;letter-spacing:0.23px"><span style="color:#cacaca">делать мне больше нечего..</span></div>
<div class="t" style="left:159px;top:871px;font-size:15px;color:#cacaca;letter-spacing:-0.00px">21:59:19 -&gt;</div>
<div class="t" style="left:250px;width:101px;top:871px;text-align:right;font-size:14px;color:#348a34">*</div>
<div class="t" style="left:353.5px;top:871px;font-size:15px;letter-spacing:-0.10px"><span style="color:#348a34;font-weight:bold">Izobretatel</span></div>
<div class="t" style="left:431.8px;top:871px;font-size:15px;letter-spacing:0.01px"><span style="color:#348a34">(~Izobretat@213.141.145.78) зашел на канал #sharp</span></div>
<div class="t" style="left:159px;top:890px;font-size:15px;color:#cacaca;letter-spacing:-0.00px">22:02:12 -&gt;</div>
<div class="t" style="left:250px;width:101px;top:890px;text-align:right;font-size:14px;color:#348a34">*</div>
<div class="t" style="left:353.5px;top:890px;font-size:15px;letter-spacing:-0.47px"><span style="color:#348a34;font-weight:bold">_ProMax_</span></div>
<div class="t" style="left:425.2px;top:890px;font-size:15px;letter-spacing:-0.01px"><span style="color:#348a34">(~Max@92.47.24.251) зашел на канал #sharp</span></div>
<div class="t" style="left:159px;top:909px;font-size:15px;color:#cacaca;letter-spacing:-0.00px">22:02:48 -&gt;</div>
<div class="t" style="left:250px;width:101px;top:909px;text-align:right;font-size:14px;color:#4848d0">*</div>
<div class="t" style="left:353.5px;top:909px;font-size:15px;letter-spacing:1.44px"><span style="color:#b83030">bytecat</span></div>
<div class="t" style="left:413.5px;top:909px;font-size:15px;letter-spacing:0.69px"><span style="color:#cacaca">покасал fragment</span></div>
<div class="t" style="left:159px;top:928px;font-size:15px;color:#cacaca;letter-spacing:-0.00px">22:03:00 -&gt;</div>
<div class="t" style="left:250px;width:101px;top:928px;text-align:right;font-size:14px;color:#7a4a2a">*</div>
<div class="t" style="left:356.1px;top:928px;font-size:15px;letter-spacing:0.96px"><span style="color:#6c4228">|ProMax|</span></div>
<div class="t" style="left:430.3px;top:928px;font-size:15px;letter-spacing:0.34px"><span style="color:#6c4228">ушел (Connection reset by peer)</span></div>
<div class="t" style="left:159px;top:947px;font-size:15px;color:#cacaca;letter-spacing:-0.00px">22:03:21 -&gt;</div>
<div class="t" style="left:200px;width:150.90px;top:947px;text-align:right;font-size:15px;color:#2c7a68;letter-spacing:0.90px">fragment</div>
<div class="t" style="left:354px;top:947px;font-size:15px;letter-spacing:0.80px"><span style="color:#cacaca">^_^</span></div>
<div class="a" style="left:1082px;top:488px;width:15px;height:495px;background:#262626;border-radius:3px"></div>
<div class="a" style="left:1082px;top:488px;width:15px;height:14px;background:#2c2c2c;border-radius:3px 3px 0 0"></div>
<svg class="i" style="left:1085px;top:491px" width="10" height="8"><path d="M1.5 6 L5 2.5 L8.5 6" stroke="#c8c8c8" stroke-width="1.4" fill="none"/></svg>
<div class="a" style="left:1082px;top:488px;width:15px;height:495px;border:1px solid #161616;border-radius:3px"></div>
<div class="a" style="left:1082px;top:940px;width:15px;height:30px;background:#2a2a2a;border:1px solid #161616"></div>
<div class="a" style="left:1086px;top:952px;width:7px;height:1px;background:#3c3c3c"></div>
<div class="a" style="left:1086px;top:954px;width:7px;height:1px;background:#3c3c3c"></div>
<div class="a" style="left:1086px;top:956px;width:7px;height:1px;background:#3c3c3c"></div>
<div class="a" style="left:1082px;top:970px;width:15px;height:13px;background:#282828;border-radius:0 0 3px 3px"></div>
<svg class="i" style="left:1085px;top:973px" width="10" height="8"><path d="M1.5 2 L5 5.5 L8.5 2" stroke="#3c3c3c" stroke-width="1.4" fill="none"/></svg>
<svg class="i" style="left:156px;top:997px" width="7" height="7"><circle cx="3.5" cy="3.5" r="2.6" fill="#8a6a10"/></svg>
<div class="t" style="left:169px;top:994px;font-size:14px;color:#c8c8c8;letter-spacing:0.3px">rumaxi</div>
<div class="a" style="left:218px;top:989px;width:878px;height:25px;background:#000;border-radius:4px"></div>
<div class="a" style="left:1103px;top:459px;width:174px;height:17px;background:#1c1c1c;border:1px solid #2a2a2a"></div>
<div class="t" style="left:1134px;top:463px;font-size:12px;color:#d0d0d0;letter-spacing:1px">3 оп-ов, 62 всего</div>
<div class="a" style="left:1104px;top:482px;width:155px;height:515px;background:#000"></div>
<svg class="i" style="left:1106px;top:492px" width="8" height="8"><defs><radialGradient id="dg0" cx="0.5" cy="0.7" r="0.6"><stop offset="0" stop-color="#6ac020"/><stop offset="1" stop-color="#2a6010"/></radialGradient></defs><circle cx="4" cy="4" r="3.5" fill="url(#dg0)"/></svg>
<div class="t" style="left:1119px;top:488px;font-size:15px;color:#d4d4d4;letter-spacing:0.80px">o</div>
<svg class="i" style="left:1106px;top:519px" width="8" height="8"><defs><radialGradient id="dg1" cx="0.5" cy="0.7" r="0.6"><stop offset="0" stop-color="#6ac020"/><stop offset="1" stop-color="#2a6010"/></radialGradient></defs><circle cx="4" cy="4" r="3.5" fill="url(#dg1)"/></svg>
<div class="t" style="left:1119px;top:515px;font-size:15px;color:#858585;letter-spacing:0.22px">rusalka(off)</div>
<svg class="i" style="left:1106px;top:546px" width="8" height="8"><defs><radialGradient id="dg2" cx="0.5" cy="0.7" r="0.6"><stop offset="0" stop-color="#6ac020"/><stop offset="1" stop-color="#2a6010"/></radialGradient></defs><circle cx="4" cy="4" r="3.5" fill="url(#dg2)"/></svg>
<div class="t" style="left:1119px;top:542px;font-size:15px;color:#858585;letter-spacing:-0.11px">sw54</div>
<svg class="i" style="left:1106px;top:573px" width="8" height="8"><circle cx="4" cy="4" r="3" fill="#7a5a10"/></svg>
<div class="t" style="left:1119px;top:569px;font-size:15px;color:#d4d4d4;letter-spacing:0.28px">rumaxi</div>
<div class="t" style="left:1119px;top:596px;font-size:15px;color:#d4d4d4;letter-spacing:0.80px">^</div>
<div class="t" style="left:1119px;top:623px;font-size:15px;color:#d4d4d4;letter-spacing:-0.29px">_ProMax_</div>
<div class="t" style="left:1119px;top:650px;font-size:15px;color:#858585;letter-spacing:0.51px">anaesthesia</div>
<div class="t" style="left:1119px;top:677px;font-size:15px;color:#d4d4d4;letter-spacing:-0.41px">Breeze</div>
<div class="t" style="left:1119px;top:704px;font-size:15px;color:#d4d4d4;letter-spacing:1.39px">bytecat</div>
<div class="t" style="left:1119px;top:731px;font-size:15px;color:#d4d4d4;letter-spacing:0.88px">Daemon</div>
<div class="t" style="left:1119px;top:758px;font-size:15px;color:#d4d4d4;letter-spacing:0.56px">Dark_Confidant</div>
<div class="t" style="left:1119px;top:785px;font-size:15px;color:#858585;letter-spacing:-0.02px">DarkElve</div>
<div class="t" style="left:1119px;top:812px;font-size:15px;color:#d4d4d4;letter-spacing:0.80px">dolphin</div>
<div class="t" style="left:1119px;top:839px;font-size:15px;color:#858585;letter-spacing:0.15px">domer41</div>
<div class="t" style="left:1119px;top:866px;font-size:15px;color:#858585;letter-spacing:1.09px">domer41|afk</div>
<div class="t" style="left:1119px;top:893px;font-size:15px;color:#d4d4d4;letter-spacing:0.80px">fee</div>
<div class="t" style="left:1119px;top:920px;font-size:15px;color:#d4d4d4;letter-spacing:-0.20px">FiX</div>
<div class="t" style="left:1119px;top:947px;font-size:15px;color:#d4d4d4;letter-spacing:0.93px">fragment</div>
<div class="t" style="left:1119px;top:974px;font-size:15px;color:#d4d4d4;letter-spacing:0.33px">fst</div>
<div class="a" style="left:1264px;top:482px;width:14px;height:515px;background:#1e1e1e;border-radius:3px"></div>
<div class="a" style="left:1264px;top:482px;width:14px;height:14px;background:#262626;border-radius:3px 3px 0 0"></div>
<svg class="i" style="left:1266px;top:485px" width="10" height="8"><path d="M1.5 6 L5 2.5 L8.5 6" stroke="#3c3c3c" stroke-width="1.4" fill="none"/></svg>
<div class="a" style="left:1264px;top:482px;width:14px;height:515px;border:1px solid #161616;border-radius:3px"></div>
<div class="a" style="left:1264px;top:495px;width:14px;height:150px;background:#262626;border:1px solid #161616"></div>
<div class="a" style="left:1267px;top:568px;width:7px;height:1px;background:#3a3a3a"></div>
<div class="a" style="left:1267px;top:570px;width:7px;height:1px;background:#3a3a3a"></div>
<div class="a" style="left:1267px;top:572px;width:7px;height:1px;background:#3a3a3a"></div>
<div class="a" style="left:1264px;top:984px;width:14px;height:13px;background:#262626;border-radius:0 0 3px 3px"></div>
<svg class="i" style="left:1266px;top:987px" width="10" height="8"><path d="M1.5 2 L5 5.5 L8.5 2" stroke="#c8c8c8" stroke-width="1.4" fill="none"/></svg>
<div class="a" style="left:1104px;top:999px;width:173px;height:7px;background:#1c1c1c;border-radius:3px"></div>
<div class="a" style="left:1104px;top:1000px;width:69px;height:5px;background:linear-gradient(#999,#777);border-radius:2px"></div>
<div class="a" style="left:1104px;top:1008px;width:173px;height:7px;background:#1c1c1c;border-radius:3px"></div>
<div class="a" style="left:451px;top:220px;width:533px;height:81px;background:#1c1c1c"></div>
<div class="a" style="left:452px;top:221px;width:531px;height:8px;background:linear-gradient(#555,#444)"></div>
<div class="a" style="left:452px;top:229px;width:531px;height:8px;background:linear-gradient(#2e2e2e,#262626)"></div>
<div class="a" style="left:452px;top:237px;width:531px;height:63px;background:#111"></div>
<svg class="i" style="left:456px;top:225px" width="11" height="9"><rect width="11" height="9" fill="#666"/><rect x="0.5" y="0.5" width="10" height="8" fill="#3a3a3a"/><path d="M2 2 H9 M2.3 2 V4.3 H8.3 V6.8 H2" fill="none" stroke="#e8e8e8" stroke-width="1.3"/></svg>
<div class="t" style="left:639px;top:224px;font-size:10.5px;font-weight:bold;color:#f0f0f0;letter-spacing:0.65px">Терминал - root@leta:~</div>
<svg class="i" style="left:945px;top:225px" width="34" height="9"><rect x="1" y="6" width="5" height="2" fill="#e8e8e8"/><rect x="14.5" y="1.5" width="5" height="6" fill="none" stroke="#e8e8e8" stroke-width="1.3"/><path d="M28 2 L32 7 M32 2 L28 7" stroke="#e8e8e8" stroke-width="1.6"/></svg>
<div class="t" style="left:455px;top:242px;font-family:'Liberation Mono',monospace;font-size:13.33px;color:#d4d4d4">[root@leta ~]# scrot</div>
<div class="a" style="left:614px;top:240px;width:8px;height:18px;background:#00e000"></div>
<div class="a" style="left:967px;top:239px;width:15px;height:60px;background:#181818;border:1px solid #0c0c0c;border-radius:3px"></div>
<div class="a" style="left:968px;top:240px;width:13px;height:14px;background:#202020;border-bottom:1px solid #161616"></div>
<div class="a" style="left:968px;top:254px;width:13px;height:30px;background:#1e1e1e;border-bottom:1px solid #161616"></div>
<div class="a" style="left:971px;top:267px;width:7px;height:1px;background:#333"></div>
<div class="a" style="left:971px;top:269px;width:7px;height:1px;background:#333"></div>
<div class="a" style="left:971px;top:271px;width:7px;height:1px;background:#333"></div>
<svg class="i" style="left:970px;top:244px" width="9" height="6"><path d="M1 5 L4.5 1.5 L8 5" stroke="#333" stroke-width="1.2" fill="none"/></svg>
<svg class="i" style="left:970px;top:289px" width="9" height="6"><path d="M1 1 L4.5 4.5 L8 1" stroke="#333" stroke-width="1.2" fill="none"/></svg>
</body></html>
